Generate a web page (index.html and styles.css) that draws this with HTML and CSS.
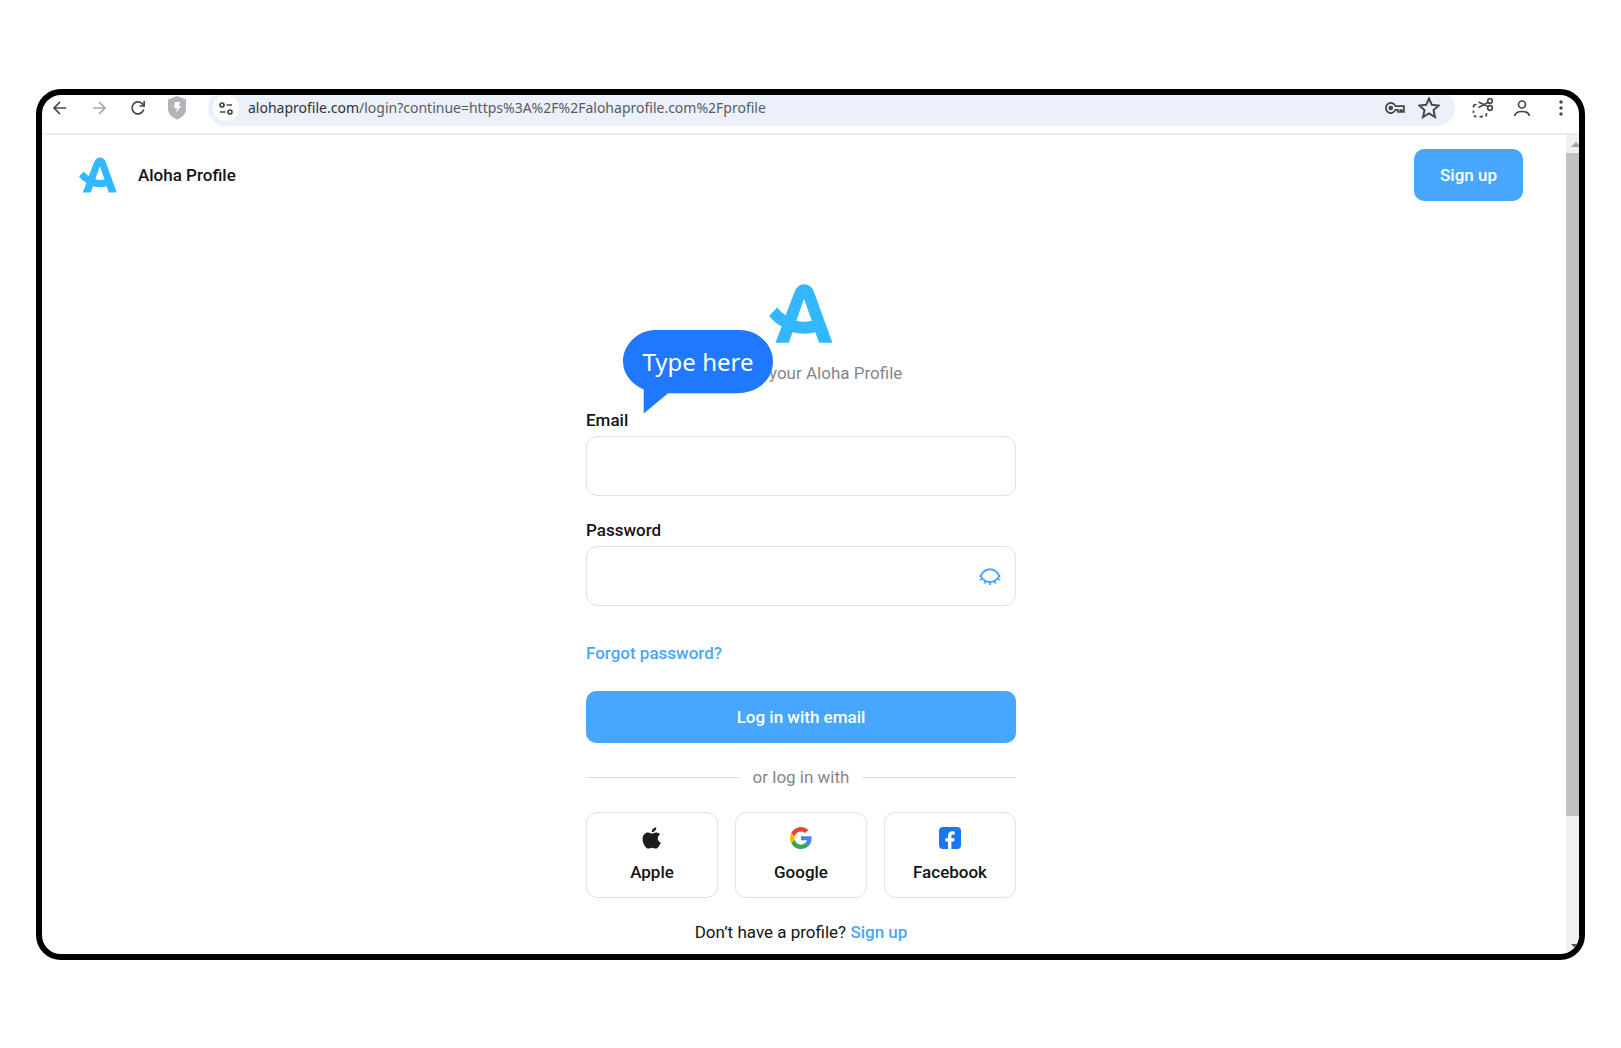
FILE: index.html
```html
<!DOCTYPE html>
<html lang="en">
<head>
<meta charset="utf-8">
<meta name="viewport" content="width=device-width, initial-scale=1">
<title>Aloha Profile</title>
<link rel="stylesheet" href="styles.css">
</head>
<body>
<svg class="defs" width="0" height="0" aria-hidden="true">
  <symbol id="aloha" viewBox="566 37 194 180">
    <path fill-rule="evenodd" d="M585 216L604 167Q581 155 566 135L590 109Q601 123 616 132L643 62Q652 38 673 38Q694 38 703 62L759 216H718L707 184Q672 193 637 184L626 216ZM672 82L649 149Q672 155 696 149Z"/>
  </symbol>
</svg>
<div class="browser">
  <div class="toolbar">
    <div class="nav">
      <button class="tool" aria-label="Back"><svg width="14" height="14" viewBox="0 0 14 14"><path d="M13 7H1.5M7 1L1 7l6 6"/></svg></button>
      <button class="tool faded" aria-label="Forward"><svg width="14" height="14" viewBox="0 0 14 14"><path d="M1 7h11.500M7 1l6 6-6 6"/></svg></button>
      <button class="tool" aria-label="Reload"><svg width="16" height="16" viewBox="0 0 16 16"><path d="M13.800 9.500A6 6 0 1 1 12.800 4.200L14 5.500M14.200 1v5H9.500"/></svg></button>
      <button class="tool" aria-label="Shield"><svg class="solid shield" width="18" height="24" viewBox="0 0 18 24"><path d="M9 0l9 3.500V13c0 5-4 8.500-9 10.500C4 21.500 0 18 0 13V3.500z"/><path class="bolt" d="M7 6h5l-1 4h2l-5 7 1-5H6z"/></svg></button>
    </div>
    <div class="address">
      <button class="site-info" aria-label="Site information"><svg width="14" height="13" viewBox="0 0 14 13"><circle cx="3" cy="3" r="2"/><path d="M7.500 3H13M1 10h5.500"/><circle cx="11" cy="10" r="2"/></svg></button>
      <span class="url"><b>alohaprofile.com</b>/login?continue=https%3A%2F%2Falohaprofile.com%2Fprofile</span>
      <button class="tool" aria-label="Passwords"><svg width="20" height="12" viewBox="0 0 20 12"><path d="M10.500 4.200A5 5 0 1 0 10.500 7.800H13V10h2.500V8H17v2h2V4.200z"/><circle cx="5.800" cy="6" r="1.500" fill="#474747"/></svg></button>
      <button class="tool" aria-label="Bookmark"><svg width="22" height="22" viewBox="0 0 22 22"><path stroke-width="2" d="M11 1.500l2.800 6.300 6.900.7-5.200 4.600 1.500 6.900-6-3.600L5 20l1.500-6.900L1.300 8.500l6.900-.7z"/></svg></button>
    </div>
    <div class="extras">
      <button class="tool" aria-label="Screenshot"><svg width="22" height="20" viewBox="0 0 22 20"><circle cx="18" cy="3" r="2.300"/><circle cx="18" cy="10" r="2.300"/><path d="M16 4.500L6.500 9.500M16 8.500L6.500 4M4.500 6.500H4Q1.500 6.500 1.500 9v.5M1.500 12.500v2.500M2 17.500q.7 1.200 2.500 1.200M7.500 18.700H11M13.500 18.400q1.200-.8 1-3.400"/></svg></button>
      <button class="tool" aria-label="Account"><svg width="18" height="17" viewBox="0 0 18 17"><circle cx="9" cy="4.500" r="3.500"/><path d="M1.500 16q1-4.500 7.500-4.500t7.500 4.500"/></svg></button>
      <button class="tool" aria-label="Menu"><svg class="solid" width="4" height="16" viewBox="0 0 4 16"><circle cx="2" cy="2" r="1.700"/><circle cx="2" cy="8" r="1.700"/><circle cx="2" cy="14" r="1.700"/></svg></button>
    </div>
  </div>
  <div class="viewport">
    <div class="page">
      <header class="header">
        <svg class="logo" width="38" height="36"><use href="#aloha"/></svg>
        <span class="brand">Aloha Profile</span>
        <button class="primary signup">Sign up</button>
      </header>
      <main class="main">
        <form class="login">
          <svg class="logo" width="64" height="59"><use href="#aloha"/></svg>
          <p class="intro">your Aloha Profile</p>
          <div class="field">
            <label for="email">Email</label>
            <div class="box"><input id="email" type="email"></div>
          </div>
          <div class="field">
            <label for="password">Password</label>
            <div class="box">
              <input id="password" type="password">
              <button type="button" class="reveal" aria-label="Show password"><svg width="22" height="17" viewBox="0 0 22 17"><path d="M1.500 8C4 3.500 7 1.300 11 1.300S18 3.500 20.500 8C18 12 15 14 11 14S4 12 1.500 8zM3 10.500L.8 12M6.500 13l-1 2.500M11 14v3M15.500 13l1 2.500M19 10.500l2.200 1.500"/></svg></button>
            </div>
          </div>
          <a class="link forgot" href="#">Forgot password?</a>
          <button type="submit" class="primary submit">Log in with email</button>
          <div class="divider">or log in with</div>
          <div class="providers">
            <button type="button" class="provider">
              <svg width="22" height="22" viewBox="0 0 22 22" fill="#1c1d1f"><path d="M15.300.2c.2 2.500-2 5-4.500 4.900C10.600 2.700 12.900.5 15.300.2zM18.900 7.400c-3.200 2.200-2.700 6.600.9 8.100-.9 2.500-2.900 6-4.900 6.100-1.500.1-2-.9-3.700-.9s-2.300.9-3.700.9C4.800 21.700 1.600 16.500 1.600 12.200c0-4.300 2.700-6.600 5.300-6.600 1.700 0 3.100 1.100 4.200 1.100 1 0 2.600-1.200 4.600-1.100 1.300.1 2.400.7 3.200 1.800z"/></svg>
              Apple</button>
            <button type="button" class="provider">
              <svg width="22" height="22" viewBox="0 0 24 24"><path fill="#4285f4" d="M23.500 12.300c0-.8-.1-1.600-.2-2.300H12v4.500h6.500a5.500 5.500 0 0 1-2.400 3.600v3h3.900c2.200-2.100 3.500-5.100 3.500-8.800z"/><path fill="#34a853" d="M12 24c3.200 0 6-1.100 7.900-2.900l-3.900-3c-1.100.7-2.400 1.200-4.100 1.200-3.100 0-5.800-2.100-6.700-5H1.300v3.100A12 12 0 0 0 12 24z"/><path fill="#fbbc05" d="M5.300 14.300a7.200 7.200 0 0 1 0-4.600V6.600h-4a12 12 0 0 0 0 10.800z"/><path fill="#ea4335" d="M12 4.800c1.800 0 3.300.6 4.600 1.800L20 3.200A12 12 0 0 0 1.300 6.600l4 3.100c.9-2.800 3.600-4.900 6.700-4.900z"/></svg>
              Google</button>
            <button type="button" class="provider">
              <svg width="22" height="22" viewBox="0 0 22 22"><rect width="22" height="22" rx="4" fill="#1877f2"/><path fill="#fff" d="M9 22v-7.500H6.300v-3.300H9V9c0-3 1.700-4.700 4.400-4.700.9 0 1.800.1 2.300.2v2.900h-1.500c-1.400 0-1.800.9-1.800 1.800v2h3.200l-.5 3.300h-2.700V22z"/></svg>
              Facebook</button>
          </div>
          <p class="join">Don’t have a profile? <a class="link" href="#">Sign up</a></p>
          <div class="bubble">
            <svg class="bubble-shape" width="150" height="84" viewBox="130 178 449 251"><path d="M226 178H480C535 178 579 222 579 272C579 325 535 367 472 367H265L192 428V356C155 338 130 310 130 272C130 222 175 178 226 178Z"/></svg>
            <span class="bubble-text">Type here</span>
          </div>
        </form>
      </main>
    </div>
    <div class="scrollbar" aria-hidden="true">
      <svg width="13" height="18" viewBox="0 0 13 18"><path d="M5 12l5-5 5 5z" fill="#a3a3a3"/></svg>
      <div class="thumb"></div>
      <svg width="13" height="18" viewBox="0 0 13 18"><path d="M5 8l5 5 5-5z" fill="#505050"/></svg>
    </div>
  </div>
</div>
</body>
</html>
```
FILE: styles.css
```css
* {
  box-sizing: border-box;
}

body {
  margin: 0;
  padding: 89px 36px;
  background: #fff;
  color: #141414;
  font: 17px/24px Roboto, sans-serif;
}

p {
  margin: 0;
}

button {
  padding: 0;
  border: 0;
  background: none;
  color: inherit;
  font: inherit;
  font-weight: 500;
  cursor: pointer;
}

svg {
  display: block;
  flex: none;
}

.defs {
  position: absolute;
}

.browser {
  border: 6px solid #000;
  border-radius: 25px;
  overflow: hidden;
}

/* Browser toolbar, tucked slightly under the frame */
.toolbar {
  display: flex;
  align-items: center;
  gap: 17px;
  margin-top: -5px;
  padding: 0 7px 7px 9px;
  border-bottom: 2px solid #ebebeb;
}

.nav,
.extras {
  display: flex;
  align-items: center;
}

.nav {
  gap: 21px;
  padding-right: 5px;
}

.extras {
  gap: 17px;
}

.tool svg,
.site-info svg {
  fill: none;
  stroke: #474747;
  stroke-width: 1.7;
}

.nav .tool,
.extras .tool {
  display: grid;
  place-items: center;
  width: 18px;
}

.extras .tool {
  width: 22px;
}

.tool.faded svg {
  stroke: #a6a6a6;
}

.tool svg.solid {
  fill: #474747;
  stroke: none;
}

.tool svg.shield {
  fill: #b3b3ba;
}

.tool .bolt {
  fill: #fff;
}

.address {
  flex: 1;
  display: flex;
  align-items: center;
  gap: 9px;
  height: 36px;
  padding: 0 15px 0 5px;
  border-radius: 18px;
  background: #ebf0fa;
}

.address .tool {
  margin-left: 4px;
}

.site-info {
  display: grid;
  place-items: center;
  width: 26px;
  height: 26px;
  border-radius: 50%;
  background: #fff;
}

.url {
  flex: 1;
  min-width: 0;
  overflow: hidden;
  white-space: nowrap;
  color: #5a5c60;
  font: 14px/24px "Noto Sans", "Open Sans", sans-serif;
}

.url b {
  color: #303134;
  font-weight: 400;
}

/* Page */
.viewport {
  display: flex;
}

.page {
  flex: 1;
  min-width: 0;
}

.scrollbar {
  display: flex;
  flex-direction: column;
  width: 13px;
  background: #f0f0f0;
}

.thumb {
  height: 81%;
  margin-bottom: auto;
  background: #c1c1c1;
}

.logo {
  fill: #33b8ff;
}

.header {
  display: flex;
  align-items: center;
  gap: 21px;
  padding: 14px 43px 0 37px;
}

.brand {
  font-weight: 500;
}

.primary {
  height: 52px;
  border-radius: 10px;
  background: #47a7ff;
  color: #fff;
}

.signup {
  width: 109px;
  margin-left: auto;
}

.main {
  display: flex;
  justify-content: center;
  padding: 83px 6px 10px 0;
}

.login {
  position: relative;
  display: flex;
  flex-direction: column;
  width: 430px;
}

.login > .logo {
  align-self: center;
}

/* The callout covers the start of this line */
.intro {
  margin-top: 18px;
  padding-left: 183px;
  color: #85868b;
}

.field {
  display: flex;
  flex-direction: column;
  gap: 4px;
  margin-top: 22px;
  font-weight: 500;
}

.intro + .field {
  margin-top: 23px;
}

.box {
  display: flex;
  align-items: center;
  height: 60px;
  padding: 0 14px;
  border: 1px solid #e2e2e2;
  border-radius: 11px;
}

.box input {
  flex: 1;
  min-width: 0;
  height: 100%;
  padding: 0;
  border: 0;
  outline: 0;
  background: none;
  font: inherit;
}

.reveal svg {
  fill: none;
  stroke: #47a7ff;
  stroke-width: 2;
}

.link {
  color: #47a7ff;
  font-weight: 500;
  text-decoration: none;
}

.forgot {
  align-self: flex-start;
  margin-top: 35px;
}

.submit {
  margin-top: 26px;
}

.divider {
  display: flex;
  align-items: center;
  gap: 13px;
  margin-top: 22px;
  color: #85868b;
}

.divider::before,
.divider::after {
  content: "";
  flex: 1;
  height: 1px;
  background: #dedede;
}

.providers {
  display: grid;
  grid-template-columns: repeat(3, 1fr);
  gap: 17px;
  margin-top: 23px;
}

.provider {
  display: flex;
  flex-direction: column;
  align-items: center;
  gap: 11px;
  height: 86px;
  padding-top: 14px;
  border: 1px solid #e2e2e2;
  border-radius: 11px;
}

.join {
  margin-top: 22px;
  text-align: center;
}

/* Callout over the form */
.bubble {
  position: absolute;
  top: 46px;
  left: 37px;
  width: 150px;
}

.bubble-shape {
  fill: #1f78ff;
}

.bubble-text {
  position: absolute;
  inset: 0 0 auto;
  color: #fff;
  font: 24px/64px "Noto Sans", sans-serif;
  text-align: center;
}
```
